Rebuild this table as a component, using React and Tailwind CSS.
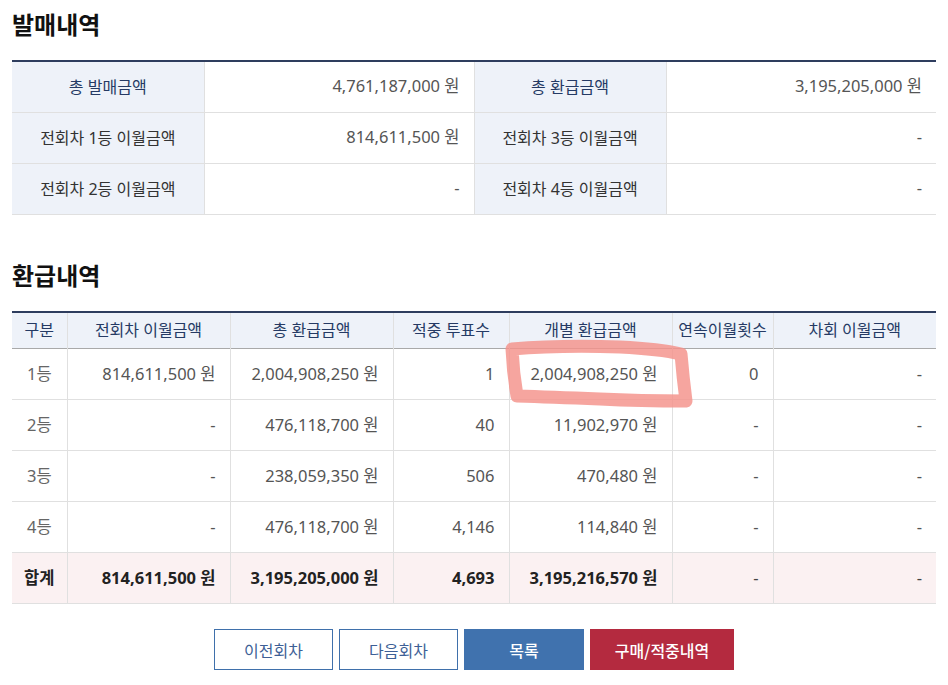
import React from 'react';

const salesRows = [
  ['총 발매금액', '4,761,187,000 원', '총 환급금액', '3,195,205,000 원', true],
  ['전회차 1등 이월금액', '814,611,500 원', '전회차 3등 이월금액', '-', false],
  ['전회차 2등 이월금액', '-', '전회차 4등 이월금액', '-', false],
];

const refundHead = ['구분', '전회차 이월금액', '총 환급금액', '적중 투표수', '개별 환급금액', '연속이월횟수', '차회 이월금액'];

const refundRows = [
  ['1등', '814,611,500 원', '2,004,908,250 원', '1', '2,004,908,250 원', '0', '-'],
  ['2등', '-', '476,118,700 원', '40', '11,902,970 원', '-', '-'],
  ['3등', '-', '238,059,350 원', '506', '470,480 원', '-', '-'],
  ['4등', '-', '476,118,700 원', '4,146', '114,840 원', '-', '-'],
];

const totalRow = ['합계', '814,611,500 원', '3,195,205,000 원', '4,693', '3,195,216,570 원', '-', '-'];

const colWidths = ['w-[55px]', 'w-[163px]', 'w-[163px]', 'w-[116px]', 'w-[163px]', 'w-[101px]', 'w-[163px]'];

function App() {
  return (
    <div
      className="relative w-[948px] min-h-[685px] bg-white px-3 pt-[6px] text-[16.5px] text-[#555]"
      style={{ fontFamily: '"Noto Sans", "Noto Sans CJK KR", sans-serif' }}
    >
      {/* 발매내역 */}
      <h2 className="text-[24px] font-bold leading-[36px] text-[#111]" style={{ fontFamily: '"Noto Sans CJK KR", sans-serif' }}>
        발매내역
      </h2>
      <table className="mt-[18px] w-full table-fixed border-collapse border-t-2 border-t-[#2e3d5e]">
        <colgroup>
          <col className="w-[192px]" />
          <col className="w-[270px]" />
          <col className="w-[192px]" />
          <col className="w-[270px]" />
        </colgroup>
        <tbody>
          {salesRows.map((r, i) => (
            <tr key={i} className="h-[51px] border-b border-[#e0e0e0]">
              <td className={`bg-[#eef2f9] text-center text-[16px] ${r[4] ? 'text-[#253a64]' : 'text-[#333]'}`}>{r[0]}</td>
              <td className="border-l border-[#e0e0e0] pr-[14px] text-right">{r[1]}</td>
              <td className={`border-l border-[#e0e0e0] bg-[#eef2f9] text-center text-[16px] ${r[4] ? 'text-[#253a64]' : 'text-[#333]'}`}>{r[2]}</td>
              <td className="border-l border-[#e0e0e0] pr-[14px] text-right">{r[3]}</td>
            </tr>
          ))}
        </tbody>
      </table>

      {/* 환급내역 */}
      <h2 className="mt-[42px] text-[24px] font-bold leading-[36px] text-[#111]" style={{ fontFamily: '"Noto Sans CJK KR", sans-serif' }}>
        환급내역
      </h2>
      <table className="mt-[18px] w-full table-fixed border-collapse border-t-2 border-t-[#2e3d5e]">
        <colgroup>
          {colWidths.map((w, i) => (
            <col key={i} className={w} />
          ))}
        </colgroup>
        <thead>
          <tr className="h-[37px] border-b border-[#a9a9a9] bg-[#eef2f9]">
            {refundHead.map((h, i) => (
              <th key={i} className={`text-center text-[16px] font-normal text-[#253a64] ${i > 0 ? 'border-l border-[#e0e0e0]' : ''}`}>
                {h}
              </th>
            ))}
          </tr>
        </thead>
        <tbody>
          {refundRows.map((r, i) => (
            <tr key={i} className="h-[51px] border-b border-[#e0e0e0]">
              {r.map((c, j) => (
                <td
                  key={j}
                  className={j === 0 ? 'text-center text-[#666]' : 'border-l border-[#e0e0e0] pr-[14px] text-right'}
                >
                  {c}
                </td>
              ))}
            </tr>
          ))}
          <tr className="h-[51px] border-b border-[#e0e0e0] bg-[#fbf1f2] font-bold text-[#222]">
            {totalRow.map((c, j) => (
              <td
                key={j}
                className={j === 0 ? 'text-center' : `border-l border-[#e0e0e0] pr-[14px] text-right ${c === '-' ? 'font-normal text-[#444]' : ''}`}
              >
                {c}
              </td>
            ))}
          </tr>
        </tbody>
      </table>

      {/* buttons */}
      <div className="mt-[25px] flex justify-center gap-[6px] text-[16px]" style={{ fontFamily: '"Noto Sans CJK KR", sans-serif' }}>
        <button className="h-[41px] w-[119px] border border-[#3f70ab] bg-white text-[#3d5f96]">이전회차</button>
        <button className="h-[41px] w-[119px] border border-[#3f70ab] bg-white text-[#3d5f96]">다음회차</button>
        <button className="h-[41px] w-[120px] bg-[#4072ae] font-medium text-white">목록</button>
        <button className="h-[41px] w-[144px] bg-[#b42a3f] font-medium text-white">구매/적중내역</button>
      </div>

      {/* hand-drawn highlight */}
      <svg className="pointer-events-none absolute left-0 top-0" width="948" height="685" viewBox="0 0 948 685">
        <path
          d="M512 349 Q560 345 620 347 Q660 349 681 354 Q683 378 686 401 Q640 401 600 399 Q550 397 517 396 Q513 372 512 349 Z"
          fill="none"
          stroke="#f4918a"
          strokeOpacity="0.82"
          strokeWidth="13"
          strokeLinejoin="round"
        />
      </svg>
    </div>
  );
}

export default App;
